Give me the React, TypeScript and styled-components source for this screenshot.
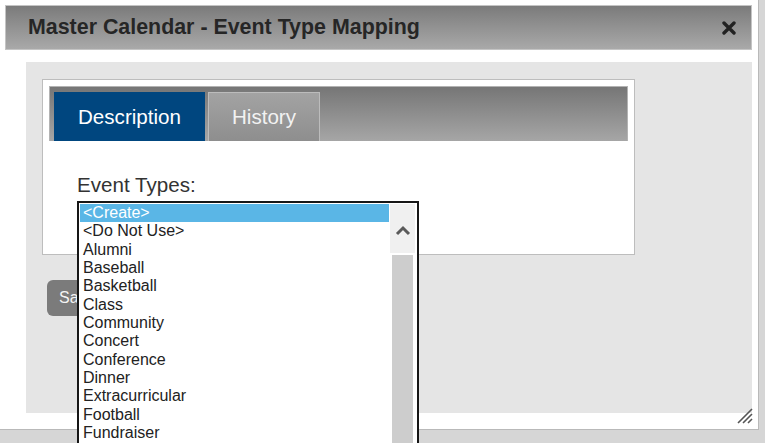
import React from "react";
import styled, { createGlobalStyle } from "styled-components";

const Global = createGlobalStyle`
  html, body {
    margin: 0;
    padding: 0;
    overflow: hidden;
    width: 765px;
    height: 443px;
    background: #d4d4d4;
    font-family: "Liberation Sans", Arial, sans-serif;
  }
`;

const Page = styled.div`
  width: 765px;
  height: 443px;
  overflow: hidden;
  background: #d6d6d6;
`;

const Dialog = styled.div`
  position: relative;
  box-sizing: border-box;
  width: 759px;
  height: 430px;
  padding: 5px 6px 0 5px;
  background: #ffffff;
  border-right: 1px solid #b9b9b9;
  border-bottom: 1px solid #b9b9b9;
  display: flex;
  flex-direction: column;
`;

const TitleBar = styled.div`
  height: 45px;
  box-sizing: border-box;
  display: flex;
  align-items: center;
  justify-content: space-between;
  padding: 0 15px 0 22px;
  background: linear-gradient(#7b7b7b, #a9a9a9);
  border: 1px solid #c4c4c4;
`;

const Title = styled.h1`
  margin: 0;
  font-size: 21.4px;
  font-weight: bold;
  color: #262626;
`;

const CloseButton = styled.button`
  border: 0;
  background: none;
  padding: 0;
  width: 14px;
  height: 14px;
  display: flex;
  cursor: pointer;
`;

const Body = styled.div`
  flex: 1;
  padding: 12px 0 16px 21px;
  display: flex;
`;

const Content = styled.div`
  flex: 1;
  background: #e5e5e5;
  padding: 17px 0 0 16px;
  display: flex;
  flex-direction: column;
  align-items: flex-start;
`;

const Panel = styled.div`
  box-sizing: border-box;
  width: 593px;
  height: 176px;
  background: #ffffff;
  border: 1px solid #bdbdbd;
  padding: 6px 6px 0 6px;
`;

const TabBar = styled.div`
  height: 55px;
  box-sizing: border-box;
  background: linear-gradient(#767676, #a6a6a6);
  border: 1px solid #b3b3b3;
  border-bottom: 0;
  padding: 5px 0 0 4px;
  display: flex;
  align-items: flex-end;
  gap: 3px;
`;

const Tab = styled.button<{ $active?: boolean; $w: number }>`
  width: ${(p) => p.$w}px;
  height: 49px;
  box-sizing: border-box;
  border: ${(p) => (p.$active ? "0" : "1px solid #bcbcbc")};
  border-bottom: 0;
  background: ${(p) => (p.$active ? "#00467f" : "linear-gradient(#a3a3a3, #8e8e8e)")};
  color: ${(p) => (p.$active ? "#ffffff" : "#f2f2f2")};
  font-family: "Liberation Sans", Arial, sans-serif;
  font-size: 20.6px;
  padding: 0;
  cursor: pointer;
`;

const Field = styled.div`
  padding: 32px 0 0 28px;
`;

const Label = styled.div`
  font-size: 20.6px;
  line-height: 23px;
  color: #333333;
`;

const Anchor = styled.div`
  position: relative;
  height: 5px;
`;

const ListBox = styled.div`
  position: absolute;
  left: 0;
  top: 5px;
  width: 342px;
  height: 260px;
  box-sizing: border-box;
  border: 2px solid #161616;
  background: #ffffff;
  padding: 1px 2px 0 1px;
  display: flex;
  z-index: 5;
`;

const Items = styled.ul`
  list-style: none;
  margin: 0;
  padding: 0;
  width: 309px;
`;

const Item = styled.li<{ $selected?: boolean }>`
  font-size: 16px;
  line-height: 18.35px;
  padding-left: 3px;
  color: ${(p) => (p.$selected ? "#ffffff" : "#222222")};
  background: ${(p) => (p.$selected ? "#5ab6e6" : "transparent")};
`;

const Scrollbar = styled.div`
  width: 25px;
  margin-left: 1px;
  display: flex;
  flex-direction: column;
`;

const ArrowUp = styled.div`
  height: 49px;
  background: #f0f0f0;
  display: flex;
  align-items: center;
  justify-content: center;
  padding-top: 4px;
  box-sizing: border-box;
`;

const Thumb = styled.div`
  flex: 1;
  margin: 2px 2px 0 2px;
  background: #cdcdcd;
`;

const SaveButton = styled.button`
  margin: 25px 0 0 5px;
  height: 36px;
  width: 64px;
  border: 0;
  border-radius: 6px;
  background: #7b7b7b;
  color: #f4f4f4;
  font-family: "Liberation Sans", Arial, sans-serif;
  font-size: 16px;
  text-align: left;
  padding: 0 0 0 12px;
`;

const Grip = styled.svg`
  position: absolute;
  right: 5px;
  bottom: 5px;
`;

const items = [
  "<Create>",
  "<Do Not Use>",
  "Alumni",
  "Baseball",
  "Basketball",
  "Class",
  "Community",
  "Concert",
  "Conference",
  "Dinner",
  "Extracurricular",
  "Football",
  "Fundraiser",
];

export default function App() {
  return (
    <>
      <Global />
      <Page>
        <Dialog>
          <TitleBar>
            <Title>Master Calendar - Event Type Mapping</Title>
            <CloseButton aria-label="Close">
              <svg width="14" height="14" viewBox="0 0 14 14">
                <path d="M2 2 L12 12 M12 2 L2 12" stroke="#222" strokeWidth="3.4" strokeLinecap="round" />
              </svg>
            </CloseButton>
          </TitleBar>
          <Body>
            <Content>
              <Panel>
                <TabBar>
                  <Tab $active $w={151}>Description</Tab>
                  <Tab $w={112}>History</Tab>
                </TabBar>
                <Field>
                  <Label>Event Types:</Label>
                  <Anchor>
                    <ListBox>
                      <Items>
                        {items.map((t, i) => (
                          <Item key={t} $selected={i === 0}>
                            {t}
                          </Item>
                        ))}
                      </Items>
                      <Scrollbar>
                        <ArrowUp>
                          <svg width="16" height="11" viewBox="0 0 16 11">
                            <path d="M2 9 L8 3 L14 9" fill="none" stroke="#5a5a5a" strokeWidth="3" />
                          </svg>
                        </ArrowUp>
                        <Thumb />
                      </Scrollbar>
                    </ListBox>
                  </Anchor>
                </Field>
              </Panel>
              <SaveButton>Save</SaveButton>
            </Content>
          </Body>
          <Grip width="16" height="16" viewBox="0 0 16 16">
            <path d="M1 15 L15 1 M6 15 L15 6 M11 15 L15 11" stroke="#555" strokeWidth="1.6" />
          </Grip>
        </Dialog>
      </Page>
    </>
  );
}
